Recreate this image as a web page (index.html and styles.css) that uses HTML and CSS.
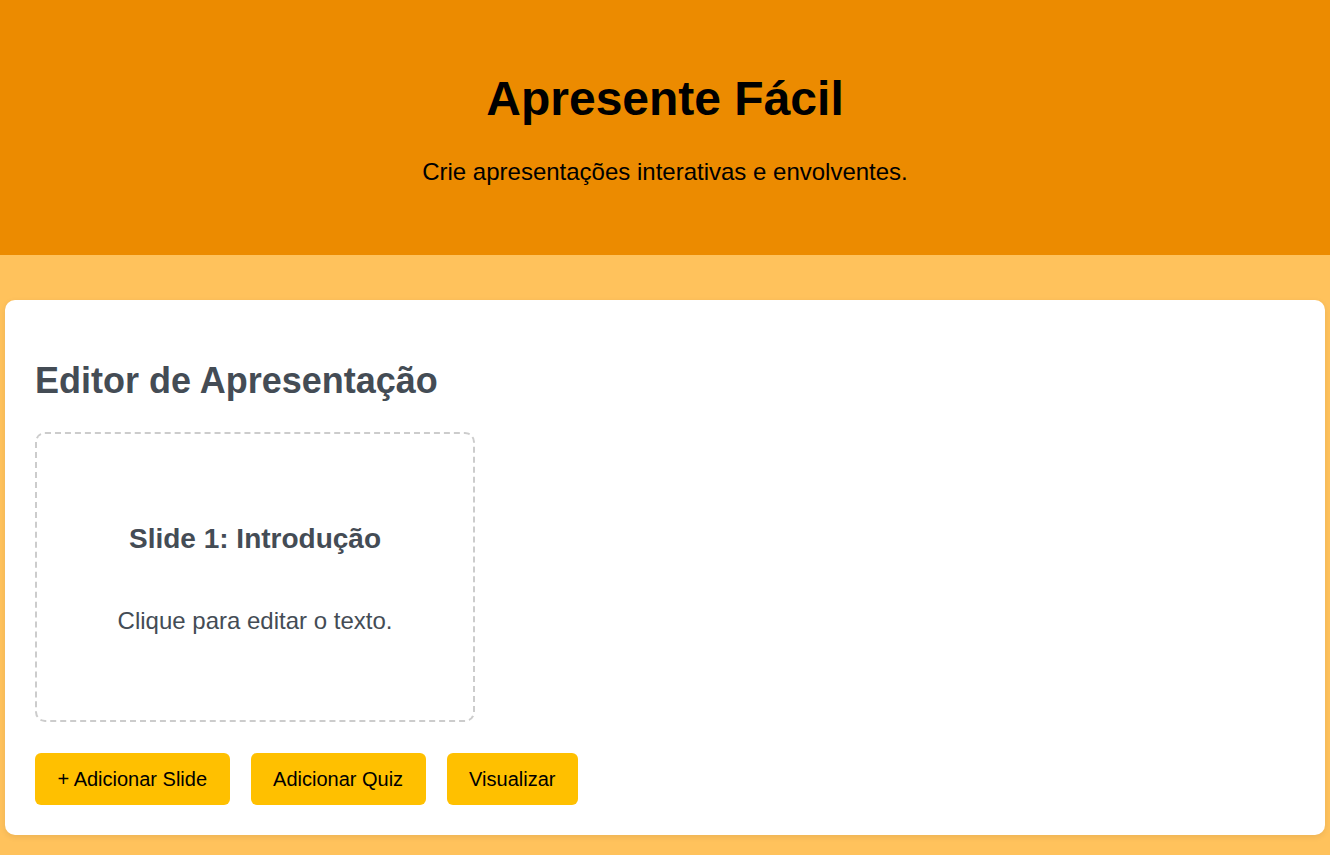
FILE: index.html
```html
<!DOCTYPE html>
<html lang="pt-BR">
<head>
<meta charset="utf-8">
<title>Apresente Fácil</title>
<link rel="stylesheet" href="styles.css">
</head>
<body>
<header class="site-header">
  <h1 class="site-title">Apresente Fácil</h1>
  <p class="site-tagline">Crie apresentações interativas e envolventes.</p>
</header>
<main class="main">
  <section class="editor">
    <h2 class="editor-title">Editor de Apresentação</h2>
    <div class="slide">
      <h3 class="slide-title">Slide 1: Introdução</h3>
      <p class="slide-text">Clique para editar o texto.</p>
    </div>
    <div class="actions">
      <button class="btn">+ Adicionar Slide</button>
      <button class="btn">Adicionar Quiz</button>
      <button class="btn">Visualizar</button>
    </div>
  </section>
</main>
</body>
</html>
```
FILE: styles.css
```css
html, body {
  margin: 0;
  padding: 0;
}
body {
  background: #ffc25c;
  font-family: "Liberation Sans", Arial, sans-serif;
  color: #000;
}
.site-header {
  background: #ec8b00;
  text-align: center;
  padding: 71px 20px 0;
  height: 255px;
  box-sizing: border-box;
}
.site-title {
  margin: 0;
  font-size: 48px;
  font-weight: bold;
  line-height: 55px;
}
.site-tagline {
  margin: 32px 0 0;
  font-size: 24px;
  line-height: 28px;
}
.main {
  padding: 45px 5px 20px;
}
.editor {
  background: #fff;
  border-radius: 10px;
  padding: 30px;
  box-shadow: 0 2px 6px rgba(0, 0, 0, 0.08);
  color: #444c55;
}
.editor-title {
  margin: 30px 0 0;
  font-size: 36px;
  line-height: 41px;
}
.slide {
  margin-top: 31px;
  width: 440px;
  height: 290px;
  box-sizing: border-box;
  border: 2px dashed #cccccc;
  border-radius: 10px;
  padding-top: 4px;
  display: flex;
  flex-direction: column;
  align-items: center;
  justify-content: center;
  text-align: center;
}
.slide-title {
  margin: 0 0 52px;
  font-size: 28px;
  line-height: 32px;
  font-weight: bold;
}
.slide-text {
  margin: 0;
  font-size: 24px;
  line-height: 28px;
}
.actions {
  display: flex;
  gap: 21px;
  margin-top: 31px;
}
.btn {
  font-family: "Liberation Sans", Arial, sans-serif;
  font-size: 20px;
  line-height: 23px;
  padding: 14.5px 22.5px;
  background: #ffc000;
  color: #000;
  border: none;
  border-radius: 6px;
  cursor: pointer;
}
```
